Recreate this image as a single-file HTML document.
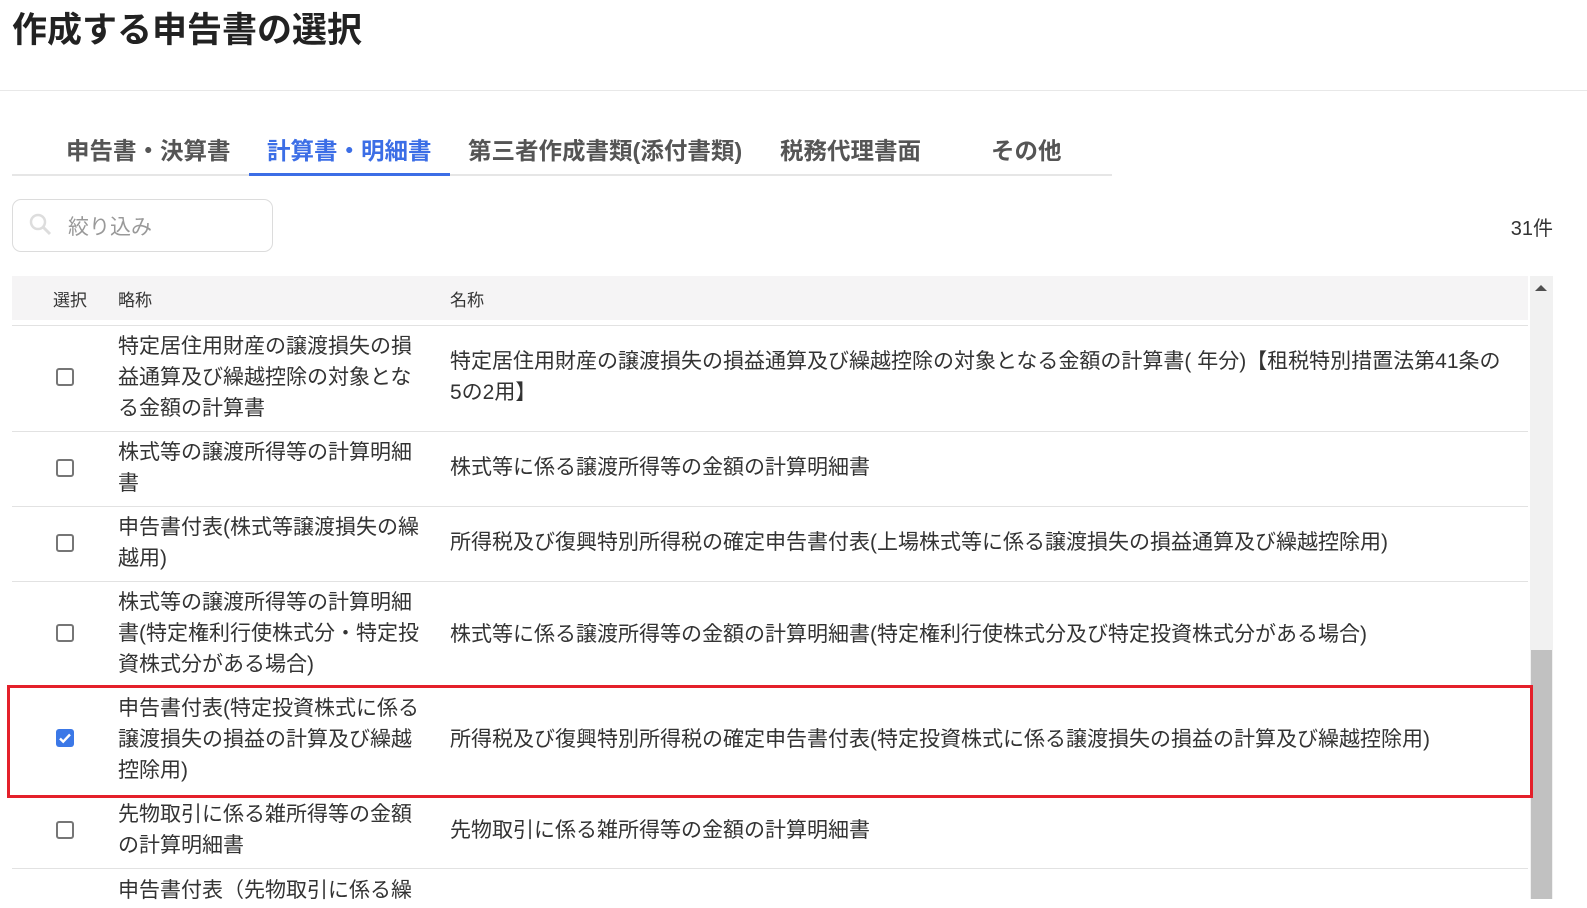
<!DOCTYPE html>
<html><head><meta charset="utf-8"><style>
*{box-sizing:border-box;margin:0;padding:0}
body{width:1587px;height:899px;overflow:hidden;background:#fff;font-family:"Liberation Sans","Noto Sans CJK JP",sans-serif;color:#333;position:relative}
.abs{position:absolute}
h1{position:absolute;left:12px;top:2px;font-size:35px;font-weight:bold;color:#222;white-space:nowrap}
.tab{position:absolute;top:132px;font-size:23.5px;font-weight:bold;color:#555;white-space:nowrap}
.row{position:absolute;left:12px;width:1516px;border-top:1px solid #e2e2e2}
.cb{position:absolute;left:44px;width:18px;height:18px;border:2px solid #767676;border-radius:3px;background:#fff}
.short{position:absolute;left:106px;width:302px;font-size:21px;line-height:31px}
.name{position:absolute;left:438px;width:1062px;font-size:21px;line-height:31px}
</style></head><body>
<h1>作成する申告書の選択</h1>
<div class="abs" style="left:0;top:90px;width:1587px;height:1px;background:#e8e8e8"></div>
<div class="tab" style="left:66px">申告書・決算書</div>
<div class="tab" style="left:267px;color:#3c6ee6">計算書・明細書</div>
<div class="tab" style="left:468px">第三者作成書類(添付書類)</div>
<div class="tab" style="left:780px">税務代理書面</div>
<div class="tab" style="left:991px">その他</div>
<div class="abs" style="left:12px;top:174px;width:1100px;height:2px;background:#e6e6e6"></div>
<div class="abs" style="left:249px;top:173px;width:201px;height:3px;background:#3c6ee6"></div>
<div class="abs" style="left:12px;top:199px;width:261px;height:53px;border:1px solid #dcdcdc;border-radius:9px"></div>
<svg class="abs" style="left:28px;top:212px" width="26" height="26" viewBox="0 0 26 26"><circle cx="10" cy="10" r="7" fill="none" stroke="#ddd" stroke-width="2.5"/><line x1="15" y1="15" x2="22" y2="22" stroke="#ddd" stroke-width="3"/></svg>
<div class="abs" style="left:68px;top:211px;font-size:21px;color:#999">絞り込み</div>
<div class="abs" style="right:34px;top:212px;font-size:20px">31件</div>
<div class="abs" style="left:12px;top:276px;width:1516px;height:44px;background:#f5f4f5"></div>
<div class="abs" style="left:53px;top:286px;font-size:17px">選択</div>
<div class="abs" style="left:118px;top:286px;font-size:17px">略称</div>
<div class="abs" style="left:450px;top:286px;font-size:17px">名称</div>
<div class="abs" style="left:1530px;top:276px;width:23px;height:623px;background:#f1f1f1"></div>
<div class="abs" style="left:1531px;top:650px;width:21px;height:249px;background:#c1c1c1"></div>
<div class="abs" style="left:1535px;top:285px;width:0;height:0;border-left:6px solid transparent;border-right:6px solid transparent;border-bottom:6px solid #505050"></div>

<div class="row" style="top:325px;height:106px"><div class="cb" style="top:42px"></div><div class="short" style="top:5px">特定居住用財産の譲渡損失の損益通算及び繰越控除の対象となる金額の計算書</div><div class="name" style="top:20px">特定居住用財産の譲渡損失の損益通算及び繰越控除の対象となる金額の計算書( 年分)【租税特別措置法第41条の5の2用】</div></div>
<div class="row" style="top:431px;height:75px"><div class="cb" style="top:27px"></div><div class="short" style="top:5px">株式等の譲渡所得等の計算明細書</div><div class="name" style="top:20px">株式等に係る譲渡所得等の金額の計算明細書</div></div>
<div class="row" style="top:506px;height:75px"><div class="cb" style="top:27px"></div><div class="short" style="top:5px">申告書付表(株式等譲渡損失の繰越用)</div><div class="name" style="top:20px">所得税及び復興特別所得税の確定申告書付表(上場株式等に係る譲渡損失の損益通算及び繰越控除用)</div></div>
<div class="row" style="top:581px;height:105px"><div class="cb" style="top:42px"></div><div class="short" style="top:5px">株式等の譲渡所得等の計算明細書(特定権利行使株式分・特定投資株式分がある場合)</div><div class="name" style="top:37px">株式等に係る譲渡所得等の金額の計算明細書(特定権利行使株式分及び特定投資株式分がある場合)</div></div>
<div class="row" style="top:686px;height:111px;border-top:none"><div class="abs" style="left:44px;top:43px;width:18px;height:18px;background:#3b78e7;border-radius:3px"><svg width="18" height="18" viewBox="0 0 18 18"><path d="M4 9.5l3.2 3.2L14 5.5" fill="none" stroke="#fff" stroke-width="2.4"/></svg></div><div class="short" style="top:7px">申告書付表(特定投資株式に係る譲渡損失の損益の計算及び繰越控除用)</div><div class="name" style="top:38px">所得税及び復興特別所得税の確定申告書付表(特定投資株式に係る譲渡損失の損益の計算及び繰越控除用)</div></div>
<div class="row" style="top:797px;height:71px;border-top:none"><div class="cb" style="top:24px"></div><div class="short" style="top:2px">先物取引に係る雑所得等の金額の計算明細書</div><div class="name" style="top:18px">先物取引に係る雑所得等の金額の計算明細書</div></div>
<div class="row" style="top:868px;height:40px"><div class="short" style="top:6px;white-space:nowrap;overflow:hidden">申告書付表（先物取引に係る繰</div></div>
<div class="abs" style="left:7px;top:685px;width:1526px;height:113px;border:3px solid #e4202a"></div>
</body></html>
